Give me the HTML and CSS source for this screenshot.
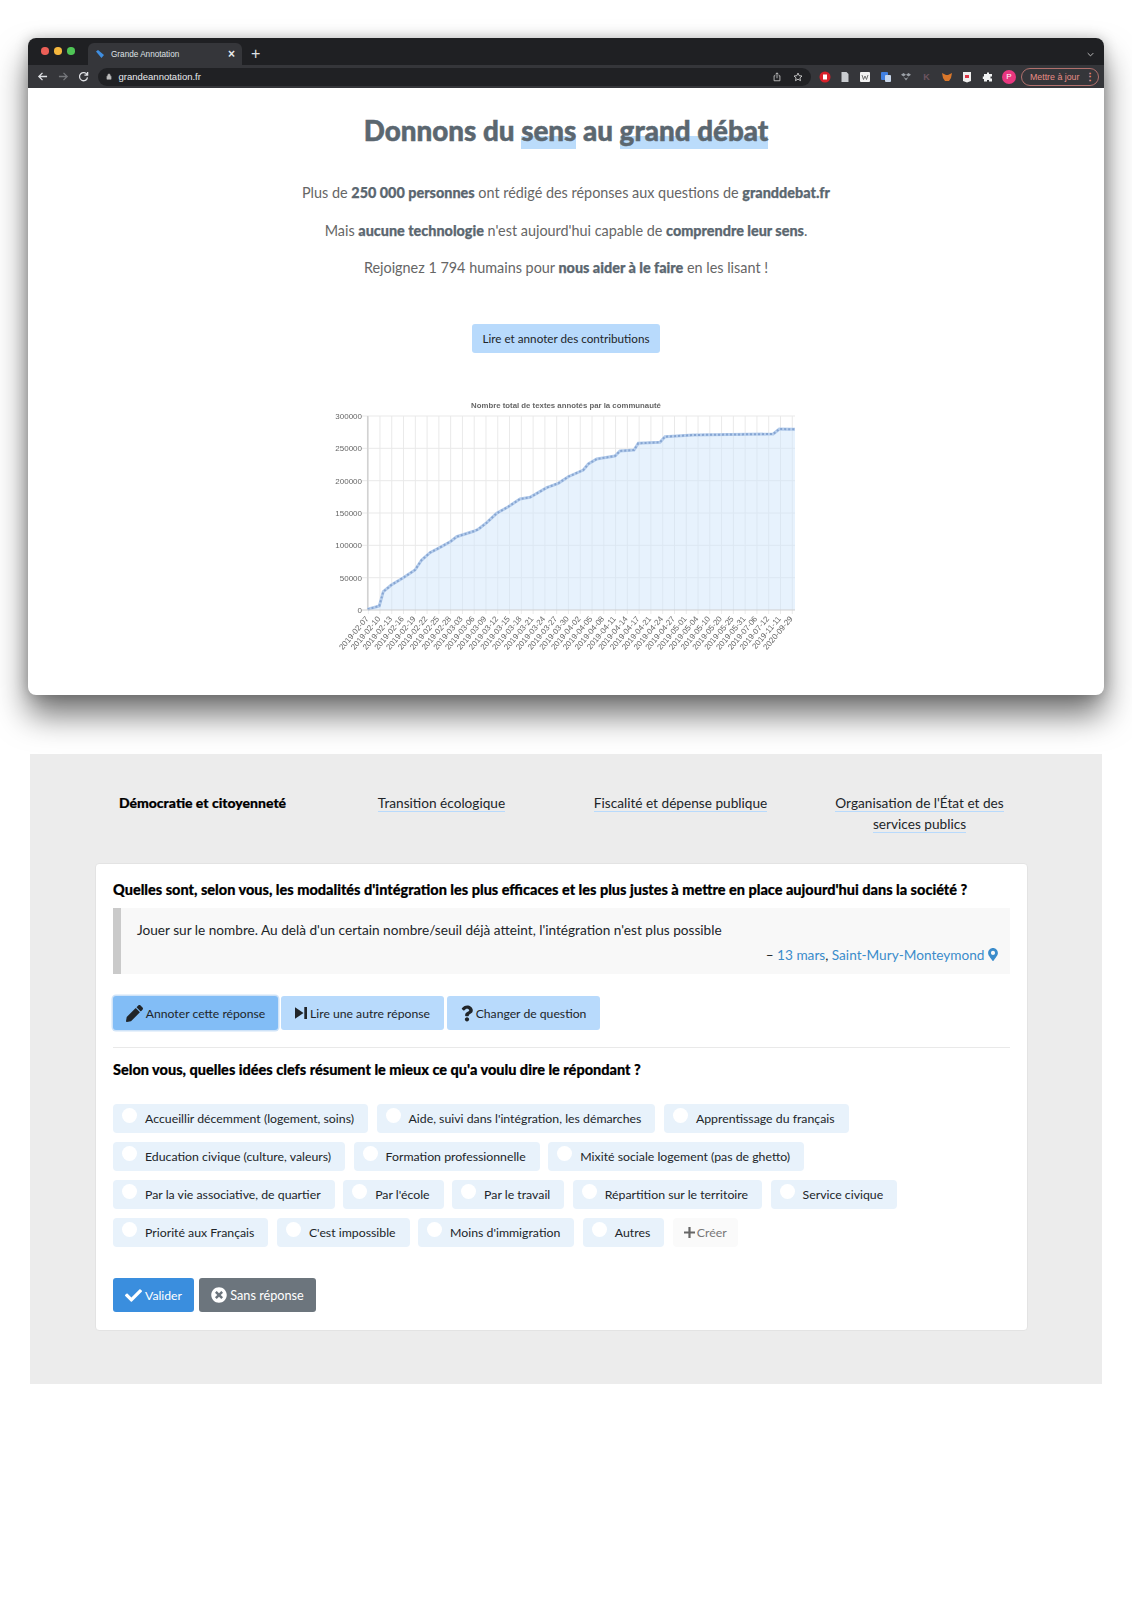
FILE: index.html
```html
<!DOCTYPE html>
<html lang="fr">
<head>
<meta charset="utf-8">
<title>Grande Annotation</title>
<link rel="stylesheet" href="styles.css">
</head>
<body>
<div class="window">
  <div class="tabstrip">
    <div class="lights"><i class="light red"></i><i class="light yellow"></i><i class="light green"></i></div>
    <div class="tab">
      <svg class="favicon" viewBox="0 0 10 10"><path d="M1 2.500 3 1l6 5-2.500 3z" fill="#3f8ee0"/></svg>
      <span class="tab-title">Grande Annotation</span>
      <span class="tab-close">×</span>
    </div>
    <span class="newtab">+</span>
    <svg class="chev" viewBox="0 0 10 6"><path d="M1 1l4 4 4-4" fill="none" stroke="#ccc" stroke-width="1.300"/></svg>
  </div>
  <div class="toolbar">
    <svg class="nav" viewBox="0 0 12 12"><path d="M11 6H2M6 2 2 6l4 4" fill="none" stroke="#dfe1e5" stroke-width="1.400"/></svg>
    <svg class="nav" viewBox="0 0 12 12"><path d="M1 6h9M6 2l4 4-4 4" fill="none" stroke="#75777b" stroke-width="1.400"/></svg>
    <svg class="nav" viewBox="0 0 12 12"><path d="M10 4.200A4.400 4.400 0 1 0 10.400 7M10.500 1v3.600H7" fill="none" stroke="#dfe1e5" stroke-width="1.400"/></svg>
    <div class="omnibox">
      <svg class="lock" viewBox="0 0 8 10"><path d="M1 4.500h6V9H1zM2.300 4.500V3a1.700 1.700 0 0 1 3.400 0v1.500" fill="#bbb" stroke="#bbb" stroke-width=".7"/></svg>
      <span class="url">grandeannotation.fr</span>
      <svg class="omni-icon" viewBox="0 0 12 12"><path d="M4 4.500H2.500v6h7v-6H8M6 7.500V1M4.200 2.800 6 1l1.800 1.800" fill="none" stroke="#ccc" stroke-width="1"/></svg>
      <svg class="omni-icon star" viewBox="0 0 12 12"><path d="m6 1.300 1.400 3.100 3.400.4-2.500 2.300.7 3.300L6 8.600l-3 1.800.7-3.300L1.200 4.800l3.400-.4z" fill="none" stroke="#ddd" stroke-width="1"/></svg>
    </div>
    <div class="extensions">
      <svg class="ext" viewBox="0 0 12 12"><circle cx="6" cy="6" r="5.500" fill="#d7202a"/><path d="M4 3.500h4v5H4z" fill="#fff"/></svg>
      <svg class="ext" viewBox="0 0 12 12"><path d="M2.500 1h5l2 2v8h-7z" fill="#c9ccd0"/></svg>
      <svg class="ext" viewBox="0 0 12 12"><rect x="1" y="1" width="10" height="10" rx="1" fill="#f1f1f1"/><path d="M3 4l1.500 4.500L6 5l1.500 3.500L9 4" fill="none" stroke="#555" stroke-width=".8"/></svg>
      <svg class="ext" viewBox="0 0 12 12"><rect x="1" y="1" width="7" height="8" rx="1" fill="#3f7fe0"/><rect x="5" y="4" width="6" height="7" rx="1" fill="#c7d6ea"/></svg>
      <svg class="ext" viewBox="0 0 12 12"><path d="M3.500 2 6 3.800 3.500 5.500 1 3.800zM8.500 2 11 3.800 8.500 5.500 6 3.800zM3.500 6 6 7.500 8.500 6 6 9.500z" fill="#9aa0a6"/></svg>
      <span class="ext ext-k">K</span>
      <svg class="ext" viewBox="0 0 12 12"><path d="M1 2l4 2h2l4-2-1 5-2 3H4L2 7z" fill="#d9772b"/></svg>
      <svg class="ext" viewBox="0 0 12 12"><path d="M2 1h8v9l-4 1.500L2 10z" fill="#eee"/><path d="M4 4h4v3H4z" fill="#dc3545"/></svg>
      <svg class="ext" viewBox="0 0 12 12"><path d="M5 1.500h2V3h3v2.500H8.500v2H10V10.500H7V9H5v1.500H2V8H.8V5.500H2V3h3z" fill="#f1f3f4"/></svg>
      <span class="avatar">P</span>
    </div>
    <div class="update"><span>Mettre à jour</span><b class="dots">⋮</b></div>
  </div>
  <div class="home">
    <h1 class="headline">Donnons du <mark class="hl">sens</mark> au <mark class="hl">grand débat</mark></h1>
    <p class="lead">Plus de <strong>250 000 personnes</strong> ont rédigé des réponses aux questions de <strong>granddebat.fr</strong></p>
    <p class="lead">Mais <strong>aucune technologie</strong> n'est aujourd'hui capable de <strong>comprendre leur sens</strong>.</p>
    <p class="lead">Rejoignez 1 794 humains pour <strong>nous aider à le faire</strong> en les lisant !</p>
    <a class="cta">Lire et annoter des contributions</a>
    <svg class="chart" viewBox="321 395 490 275" width="490" height="275">
      <defs>
        <pattern id="vgrid" x="367.700" y="0" width="11.780" height="10" patternUnits="userSpaceOnUse">
          <rect x="0" y="0" width="1" height="10" fill="#e9e9e9"/>
        </pattern>
      </defs>
      <text class="chart-title" x="566" y="408" text-anchor="middle">Nombre total de textes annotés par la communauté</text>
      <rect x="367.700" y="416" width="428" height="198" fill="url(#vgrid)"/>
      <path d="M362 416H795M362 448.300H795M362 480.700H795M362 513H795M362 545.300H795M362 577.700H795" stroke="#e9e9e9" stroke-width="1" fill="none"/>
      <path d="M367.700 416V610" stroke="#d2d2d2" stroke-width="1.500"/>
      <polygon fill="#d0e6fc" fill-opacity=".5" points="367.700,610 367.700,609.300 379.300,606 383.300,591.700 391.300,585 403.300,577.700 415,570 421.700,560 430,552.700 438.300,548.300 450.300,541.700 456.700,536.700 473.700,531.300 478.300,529.300 486.700,522.700 496.700,513.300 508.300,506.700 520,499 530,497.300 546.700,487.700 558.300,483.300 568.300,476.700 583.300,470 588.300,464 596.700,459 615,456 620,451 634,450 638.300,443.300 660,442.300 665,436.700 693.300,435 773.300,434 779.300,429 795,429.300 795,610"/>
      <polyline class="line" points="367.700,609.300 379.300,606 383.300,591.700 391.300,585 403.300,577.700 415,570 421.700,560 430,552.700 438.300,548.300 450.300,541.700 456.700,536.700 473.700,531.300 478.300,529.300 486.700,522.700 496.700,513.300 508.300,506.700 520,499 530,497.300 546.700,487.700 558.300,483.300 568.300,476.700 583.300,470 588.300,464 596.700,459 615,456 620,451 634,450 638.300,443.300 660,442.300 665,436.700 693.300,435 773.300,434 779.300,429 795,429.300"/>
      <polyline class="dots-line" points="367.700,609.300 379.300,606 383.300,591.700 391.300,585 403.300,577.700 415,570 421.700,560 430,552.700 438.300,548.300 450.300,541.700 456.700,536.700 473.700,531.300 478.300,529.300 486.700,522.700 496.700,513.300 508.300,506.700 520,499 530,497.300 546.700,487.700 558.300,483.300 568.300,476.700 583.300,470 588.300,464 596.700,459 615,456 620,451 634,450 638.300,443.300 660,442.300 665,436.700 693.300,435 773.300,434 779.300,429 795,429.300"/>
      <path d="M362 610H795" stroke="#cfcfcf" stroke-width="1"/>
      <g class="y-axis" text-anchor="end">
        <text x="362" y="419">300000</text><text x="362" y="451">250000</text><text x="362" y="484">200000</text><text x="362" y="516">150000</text><text x="362" y="548">100000</text><text x="362" y="581">50000</text><text x="362" y="613">0</text>
      </g>
      <g class="x-axis" text-anchor="end">
        <text transform="translate(369 619) rotate(-50)">2019-02-07</text>
        <text transform="translate(380.800 619) rotate(-50)">2019-02-10</text>
        <text transform="translate(392.600 619) rotate(-50)">2019-02-13</text>
        <text transform="translate(404.300 619) rotate(-50)">2019-02-16</text>
        <text transform="translate(416.100 619) rotate(-50)">2019-02-19</text>
        <text transform="translate(427.900 619) rotate(-50)">2019-02-22</text>
        <text transform="translate(439.700 619) rotate(-50)">2019-02-25</text>
        <text transform="translate(451.500 619) rotate(-50)">2019-02-28</text>
        <text transform="translate(463.200 619) rotate(-50)">2019-03-03</text>
        <text transform="translate(475 619) rotate(-50)">2019-03-06</text>
        <text transform="translate(486.800 619) rotate(-50)">2019-03-09</text>
        <text transform="translate(498.600 619) rotate(-50)">2019-03-12</text>
        <text transform="translate(510.400 619) rotate(-50)">2019-03-15</text>
        <text transform="translate(522.100 619) rotate(-50)">2019-03-18</text>
        <text transform="translate(533.900 619) rotate(-50)">2019-03-21</text>
        <text transform="translate(545.700 619) rotate(-50)">2019-03-24</text>
        <text transform="translate(557.500 619) rotate(-50)">2019-03-27</text>
        <text transform="translate(569.300 619) rotate(-50)">2019-03-30</text>
        <text transform="translate(581 619) rotate(-50)">2019-04-02</text>
        <text transform="translate(592.800 619) rotate(-50)">2019-04-05</text>
        <text transform="translate(604.600 619) rotate(-50)">2019-04-08</text>
        <text transform="translate(616.400 619) rotate(-50)">2019-04-11</text>
        <text transform="translate(628.200 619) rotate(-50)">2019-04-14</text>
        <text transform="translate(639.900 619) rotate(-50)">2019-04-17</text>
        <text transform="translate(651.700 619) rotate(-50)">2019-04-21</text>
        <text transform="translate(663.500 619) rotate(-50)">2019-04-24</text>
        <text transform="translate(675.300 619) rotate(-50)">2019-04-27</text>
        <text transform="translate(687.100 619) rotate(-50)">2019-05-01</text>
        <text transform="translate(698.800 619) rotate(-50)">2019-05-04</text>
        <text transform="translate(710.600 619) rotate(-50)">2019-05-10</text>
        <text transform="translate(722.400 619) rotate(-50)">2019-05-20</text>
        <text transform="translate(734.200 619) rotate(-50)">2019-05-25</text>
        <text transform="translate(746 619) rotate(-50)">2019-05-31</text>
        <text transform="translate(757.700 619) rotate(-50)">2019-07-06</text>
        <text transform="translate(769.500 619) rotate(-50)">2019-07-12</text>
        <text transform="translate(781.300 619) rotate(-50)">2019-11-11</text>
        <text transform="translate(793.100 619) rotate(-50)">2020-09-29</text>
      </g>
    </svg>
  </div>
</div>

<section class="panel">
  <nav class="themes">
    <div class="theme active"><span class="theme-text">Démocratie et citoyenneté</span></div>
    <div class="theme"><span class="theme-text">Transition écologique</span></div>
    <div class="theme"><span class="theme-text">Fiscalité et dépense publique</span></div>
    <div class="theme"><span class="theme-text">Organisation de l'État et des services publics</span></div>
  </nav>
  <div class="card">
    <h2 class="question">Quelles sont, selon vous, les modalités d'intégration les plus efficaces et les plus justes à mettre en place aujourd'hui dans la société ?</h2>
    <blockquote class="quote">
      <p class="quote-text">Jouer sur le nombre. Au delà d'un certain nombre/seuil déjà atteint, l'intégration n'est plus possible</p>
      <p class="quote-meta">– <a class="link">13 mars</a>, <a class="link">Saint-Mury-Monteymond</a>
        <svg class="pin" viewBox="0 0 384 512"><path d="M172.268 501.67C26.97 291.031 0 268.413 0 192 0 85.961 85.961 0 192 0s192 85.961 192 192c0 76.413-26.97 99.031-172.268 309.67-9.535 13.774-29.93 13.773-39.464 0zM192 272c44.183 0 80-35.817 80-80s-35.817-80-80-80-80 35.817-80 80 35.817 80 80 80z"/></svg>
      </p>
    </blockquote>
    <div class="actions">
      <button class="btn btn-light is-focus">
        <svg class="ico ico-pencil" viewBox="0 0 512 512"><path d="M497.9 142.1l-46.1 46.1c-4.7 4.7-12.3 4.7-17 0l-111-111c-4.7-4.7-4.7-12.3 0-17l46.1-46.1c18.7-18.7 49.1-18.7 67.9 0l60.1 60.1c18.8 18.7 18.8 49.1 0 67.9zM284.2 99.8L21.6 362.4.4 483.9c-2.9 16.4 11.4 30.6 27.8 27.8l121.5-21.3 262.6-262.6c4.7-4.7 4.7-12.3 0-17l-111-111c-4.8-4.7-12.4-4.7-17.1 0z"/></svg>
        Annoter cette réponse</button>
      <button class="btn btn-light">
        <svg class="ico ico-step" viewBox="0 0 12 14"><path d="M0 1.200 8.500 7 0 12.800zM9.300 1H12v12H9.300z"/></svg>
        Lire une autre réponse</button>
      <button class="btn btn-light">
        <svg class="ico ico-q" viewBox="0 0 384 512"><path d="M202.021 0C122.202 0 70.503 32.703 29.914 91.026c-7.363 10.58-5.093 25.086 5.178 32.874l43.138 32.709c10.373 7.865 25.132 6.026 33.253-4.148 25.049-31.381 43.63-49.449 82.757-49.449 30.764 0 68.816 19.799 68.816 49.631 0 22.552-18.617 34.134-48.993 51.164-35.423 19.86-82.299 44.576-82.299 106.405V320c0 13.255 10.745 24 24 24h72.471c13.255 0 24-10.745 24-24v-5.773c0-42.86 125.268-44.645 125.268-160.627C377.504 66.256 286.902 0 202.021 0zM192 373.459c-38.196 0-69.271 31.075-69.271 69.271 0 38.195 31.075 69.27 69.271 69.27s69.271-31.075 69.271-69.271-31.075-69.27-69.271-69.27z"/></svg>
        Changer de question</button>
    </div>
    <hr class="rule">
    <h3 class="subquestion">Selon vous, quelles idées clefs résument le mieux ce qu'a voulu dire le répondant ?</h3>
    <div class="chips">
      <div class="chip-row">
        <label class="chip"><i class="radio"></i>Accueillir décemment (logement, soins)</label>
        <label class="chip"><i class="radio"></i>Aide, suivi dans l'intégration, les démarches</label>
        <label class="chip"><i class="radio"></i>Apprentissage du français</label>
      </div>
      <div class="chip-row">
        <label class="chip"><i class="radio"></i>Education civique (culture, valeurs)</label>
        <label class="chip"><i class="radio"></i>Formation professionnelle</label>
        <label class="chip"><i class="radio"></i>Mixité sociale logement (pas de ghetto)</label>
      </div>
      <div class="chip-row">
        <label class="chip"><i class="radio"></i>Par la vie associative, de quartier</label>
        <label class="chip"><i class="radio"></i>Par l'école</label>
        <label class="chip"><i class="radio"></i>Par le travail</label>
        <label class="chip"><i class="radio"></i>Répartition sur le territoire</label>
        <label class="chip"><i class="radio"></i>Service civique</label>
      </div>
      <div class="chip-row">
        <label class="chip"><i class="radio"></i>Priorité aux Français</label>
        <label class="chip"><i class="radio"></i>C'est impossible</label>
        <label class="chip"><i class="radio"></i>Moins d'immigration</label>
        <label class="chip"><i class="radio"></i>Autres</label>
        <label class="chip chip-new"><svg class="ico-plus" viewBox="0 0 12 12"><path d="M4.800 0h2.400v4.800H12v2.400H7.200V12H4.800V7.200H0V4.800h4.800z"/></svg>Créer</label>
      </div>
    </div>
    <div class="submit">
      <button class="btn btn-primary">
        <svg class="ico ico-check" viewBox="0 0 512 512"><path d="M173.898 439.404l-166.4-166.4c-9.997-9.997-9.997-26.206 0-36.204l36.203-36.204c9.997-9.998 26.207-9.998 36.204 0L192 312.69 432.095 72.596c9.997-9.997 26.207-9.997 36.204 0l36.203 36.204c9.997 9.997 9.997 26.206 0 36.204l-294.4 294.401c-9.998 9.997-26.207 9.997-36.204-.001z"/></svg>
        Valider</button>
      <button class="btn btn-grey">
        <svg class="ico ico-times" viewBox="0 0 512 512"><path d="M256 8C119 8 8 119 8 256s111 248 248 248 248-111 248-248S393 8 256 8zm121.6 313.1c4.7 4.7 4.7 12.3 0 17L338 377.6c-4.7 4.7-12.3 4.7-17 0L256 312l-65.1 65.6c-4.7 4.7-12.3 4.7-17 0L134.4 338c-4.7-4.7-4.7-12.3 0-17l65.6-65-65.6-65.1c-4.7-4.7-4.7-12.3 0-17l39.6-39.6c4.7-4.7 12.3-4.7 17 0l65 65.7 65.1-65.6c4.7-4.7 12.3-4.7 17 0l39.6 39.6c4.7 4.7 4.7 12.3 0 17L312 256l65.6 65.1z"/></svg>
        Sans réponse</button>
    </div>
  </div>
</section>
</body>
</html>
```
FILE: styles.css
```css
* { box-sizing: border-box; }
html, body { margin: 0; padding: 0; background: #fff; }
body { font-family: "Lato", "Open Sans", sans-serif; color: #212529; height: 1600px; overflow: hidden; padding-top: 38px; }

.window { margin: 0 28px; height: 657px; border-radius: 8px; background: #fff; box-shadow: 0 20px 32px rgba(0,0,0,.55), 0 0 14px rgba(0,0,0,.22); overflow: hidden; }

.tabstrip { height: 27px; background: #1f2023; display: flex; align-items: flex-end; padding-left: 13px; }
.lights { display: flex; gap: 5.500px; align-self: center; width: 47px; margin-top: -1px; }
.light { width: 7.500px; height: 7.500px; border-radius: 50%; }
.red { background: #ec5f57; }
.yellow { background: #f5b73d; }
.green { background: #4fc556; }
.tab { width: 154px; height: 22px; background: #35363a; border-radius: 6px 6px 0 0; display: flex; align-items: center; padding: 0 7px; }
.favicon { width: 10px; height: 10px; margin-right: 6px; }
.tab-title { font: 8.200px "Liberation Sans", sans-serif; color: #dfe1e5; flex: 1; }
.tab-close { font: 700 12px "Liberation Sans", sans-serif; color: #e8eaed; }
.newtab { font: 16px "Liberation Sans", sans-serif; color: #dfe1e5; margin-left: 9px; line-height: 22px; }
.chev { width: 7px; height: 5px; margin-left: auto; margin-right: 10px; margin-bottom: 8px; }

.toolbar { height: 23px; background: #35363a; display: flex; align-items: center; padding: 0 6px 0 9px; }
.nav { width: 11px; height: 11px; margin-right: 9.500px; flex: none; }
.omnibox { width: 713px; height: 18px; margin-left: -1px; background: #202124; border-radius: 9px; display: flex; align-items: center; padding: 0 8px 0 8px; flex: none; }
.lock { width: 6px; height: 7px; margin-right: 7px; }
.url { font: 9.500px "Liberation Sans", sans-serif; color: #e8eaed; flex: 1; }
.omni-icon { width: 10px; height: 10px; margin-right: 11px; }
.star { margin-right: 0; }
.extensions { display: flex; align-items: center; gap: 8.400px; margin-left: 8px; flex: none; }
.ext { width: 12px; height: 12px; display: block; }
.ext-k { font: 700 9px "Liberation Sans", sans-serif; color: #6d5560; text-align: center; line-height: 12px; }
.avatar { width: 14px; height: 14px; border-radius: 50%; background: #e8377f; color: #fff; font: 8px/14px "Liberation Sans", sans-serif; text-align: center; }
.update { margin-left: 5px; width: 78px; height: 18px; border: 1px solid #b2716d; border-radius: 9px; display: flex; align-items: center; padding: 0 3px 0 8px; justify-content: space-between; font: 8.800px "Liberation Sans", sans-serif; color: #e98d86; white-space: nowrap; flex: none; }
.dots { font-size: 10px; color: #e98d86; }

.home { display: flex; flex-direction: column; align-items: center; }
.headline { margin: 26px 0 0; font-size: 27.800px; line-height: 34px; font-weight: 900; color: #5b6770; -webkit-text-stroke: .5px #5b6770; }
.hl { color: inherit; padding-bottom: 2px; background: linear-gradient(to bottom, transparent 63%, #bbdcfb 63%); }
.lead { margin: 0; font-size: 14.400px; line-height: 20px; color: #666; height: 37.500px; }
.lead strong { font-weight: 900; color: #5b6770; -webkit-text-stroke: .25px #5b6770; }
.headline + .lead { margin-top: 35px; }
.cta { margin-top: 28px; width: 188px; height: 29px; background: #b8dafc; border-radius: 3px; font-size: 11.700px; line-height: 29px; text-align: center; color: #212529; }
.chart { display: block; margin-top: 42px; filter: blur(.35px); }
.chart text { font-family: "Liberation Sans", sans-serif; font-size: 8px; fill: #666; }
.chart .chart-title { font-weight: 700; font-size: 7.800px; fill: #666; }
.line { fill: none; stroke: #b5cdec; stroke-width: 3; }
.dots-line { fill: none; stroke: #86a5d2; stroke-width: 2; stroke-dasharray: 2 2; }

.panel { margin: 59px 30px 0; height: 630px; background: #ececec; padding: 36px 65px 0; }
.themes { display: grid; grid-template-columns: repeat(4, 239px); margin: 0 -14px 0 -12px; height: 73px; }
.theme { text-align: center; font-size: 13.650px; line-height: 21px; color: #212529; padding: 3px 26px 0; }
.theme-text { border-bottom: 1px solid #b8dafc; }
.active { font-size: 14px; font-weight: 900; color: #000; -webkit-text-stroke: .2px #000; padding-top: 2px; }
.active .theme-text { border-bottom: 0; }
.card { width: 933px; height: 468px; background: #fff; border: 1px solid #e3e3e3; border-radius: 4px; padding: 16px 17px 0; }
.question, .subquestion { margin: 0; font-size: 14.500px; font-weight: 900; line-height: 20px; color: #000; -webkit-text-stroke: .2px #000; }
.quote { margin: 8px 0 0; height: 66px; background: #f8f8f8; border-left: 8px solid #cacaca; padding: 13px 12px 0 16px; }
.quote-text { margin: 0; font-size: 13.630px; line-height: 19px; }
.quote-meta { margin: 6px 0 0; text-align: right; font-size: 13.630px; line-height: 19px; }
.link { color: #3b8ccb; }
.pin { width: 10px; height: 13px; fill: #3b8ccb; vertical-align: -1px; }
.actions { display: flex; gap: 3px; margin-top: 22px; }
.btn { height: 34px; border: 0; border-radius: 3px; font-family: inherit; font-size: 12.200px; display: flex; align-items: center; justify-content: center; gap: 3px; padding: 0; }
.btn-light { background: #b8dafc; color: #212529; }
.actions .btn:nth-child(1) { width: 165px; }
.actions .btn:nth-child(2) { width: 163px; }
.actions .btn:nth-child(3) { width: 153px; }
.is-focus { background: #82bdf6; box-shadow: 0 0 0 1.500px #cfe3f8; }
.ico { fill: currentColor; flex: none; }
.ico-pencil { width: 17px; height: 17px; color: #212529; }
.ico-step { width: 12px; height: 14px; color: #212529; }
.ico-q { width: 12px; height: 17px; color: #212529; }
.rule { margin: 17px 0 12px; border: 0; border-top: 1px solid #e9e9e9; }
.chips { display: flex; flex-direction: column; gap: 9px; margin-top: 24px; }
.chip-row { display: flex; gap: 8.500px; }
.chip { height: 29px; background: #e8f2fb; border-radius: 4px; display: flex; align-items: center; padding: 0 14px 0 9px; font-size: 12.300px; color: #212529; white-space: nowrap; }
.radio { width: 15px; height: 15px; background: #fff; border-radius: 50%; margin-right: 8px; margin-top: -6px; flex: none; }
.chip-new { background: #fafafa; color: #777; padding: 0 11px; gap: 2px; }
.ico-plus { width: 11px; height: 11px; fill: #666; }
.submit { display: flex; gap: 5px; margin-top: 31px; }
.btn-primary { width: 81px; background: #3a8ede; color: #fff; }
.btn-grey { width: 117px; background: #6c757d; color: #fff; font-size: 12.700px; }
.ico-check { width: 17px; height: 17px; }
.ico-times { width: 16px; height: 16px; }
```
